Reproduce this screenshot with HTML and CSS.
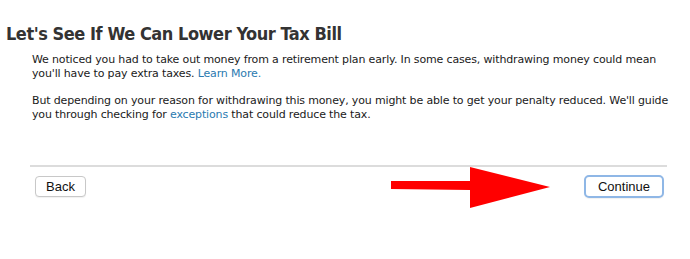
FILE: index.html
```html
<!DOCTYPE html>
<html>
<head>
<meta charset="utf-8">
<link rel="stylesheet" href="styles.css">
</head>
<body>
<div class="page">
  <h1 class="title">Let's See If We Can Lower Your Tax Bill</h1>
  <div class="content">
    <p class="para">We noticed you had to take out money from a retirement plan early. In some cases, withdrawing money could mean you'll have to pay extra taxes. <a class="link" href="#">Learn More.</a></p>
    <p class="para">But depending on your reason for withdrawing this money, you might be able to get your penalty reduced. We'll guide you through checking for <a class="link" href="#">exceptions</a> that could reduce the tax.</p>
  </div>
  <div class="footer">
    <div class="rule"></div>
    <div class="actions">
      <button class="btn">Back</button>
      <button class="btn primary">Continue</button>
    </div>
    <svg class="arrow" width="170" height="44" viewBox="0 0 170 44">
      <polygon points="0,14 79,14 79,0 159,20 79,41 79,23 0,22" fill="#ff0000"/>
    </svg>
  </div>
</div>
</body>
</html>
```
FILE: styles.css
```css
html, body {
  margin: 0;
  padding: 0;
  background: #fff;
}
.page {
  width: 690px;
  height: 259px;
  position: relative;
  font-family: "DejaVu Sans", Verdana, sans-serif;
  color: #1a1a1a;
}
.title {
  margin: 0;
  padding: 23px 0 0 6px;
  font-family: "DejaVu Sans Condensed", "DejaVu Sans", sans-serif;
  font-size: 18px;
  line-height: 22px;
  font-weight: bold;
  color: #333;
  letter-spacing: -0.45px;
}
.content {
  padding: 8px 0 0 32px;
  width: 652px;
}
.para {
  margin: 0 0 13px 0;
  font-size: 11px;
  line-height: 14px;
  letter-spacing: -0.15px;
}
.link {
  color: #2a7ab0;
  text-decoration: none;
}
.footer {
  position: relative;
  padding: 30px 0 0 30px;
  width: 637px;
}
.rule {
  height: 2px;
  background: #dcdcdc;
}
.actions {
  display: flex;
  justify-content: space-between;
  padding: 9px 3px 0 5px;
}
.btn {
  font-family: "Liberation Sans", Arial, sans-serif;
  font-size: 13px;
  height: 21px;
  padding: 0 10px;
  border: 1px solid #c8c8c8;
  border-radius: 4px;
  background: #fff;
  color: #111;
  box-shadow: 0 1px 1px rgba(0,0,0,0.06);
}
.btn.primary {
  height: 23px;
  padding: 0 12px;
  border: 2px solid #8fb7e6;
  border-radius: 5px;
  margin-top: -1px;
}
.arrow {
  position: absolute;
  left: 391px;
  top: 32px;
}
```
